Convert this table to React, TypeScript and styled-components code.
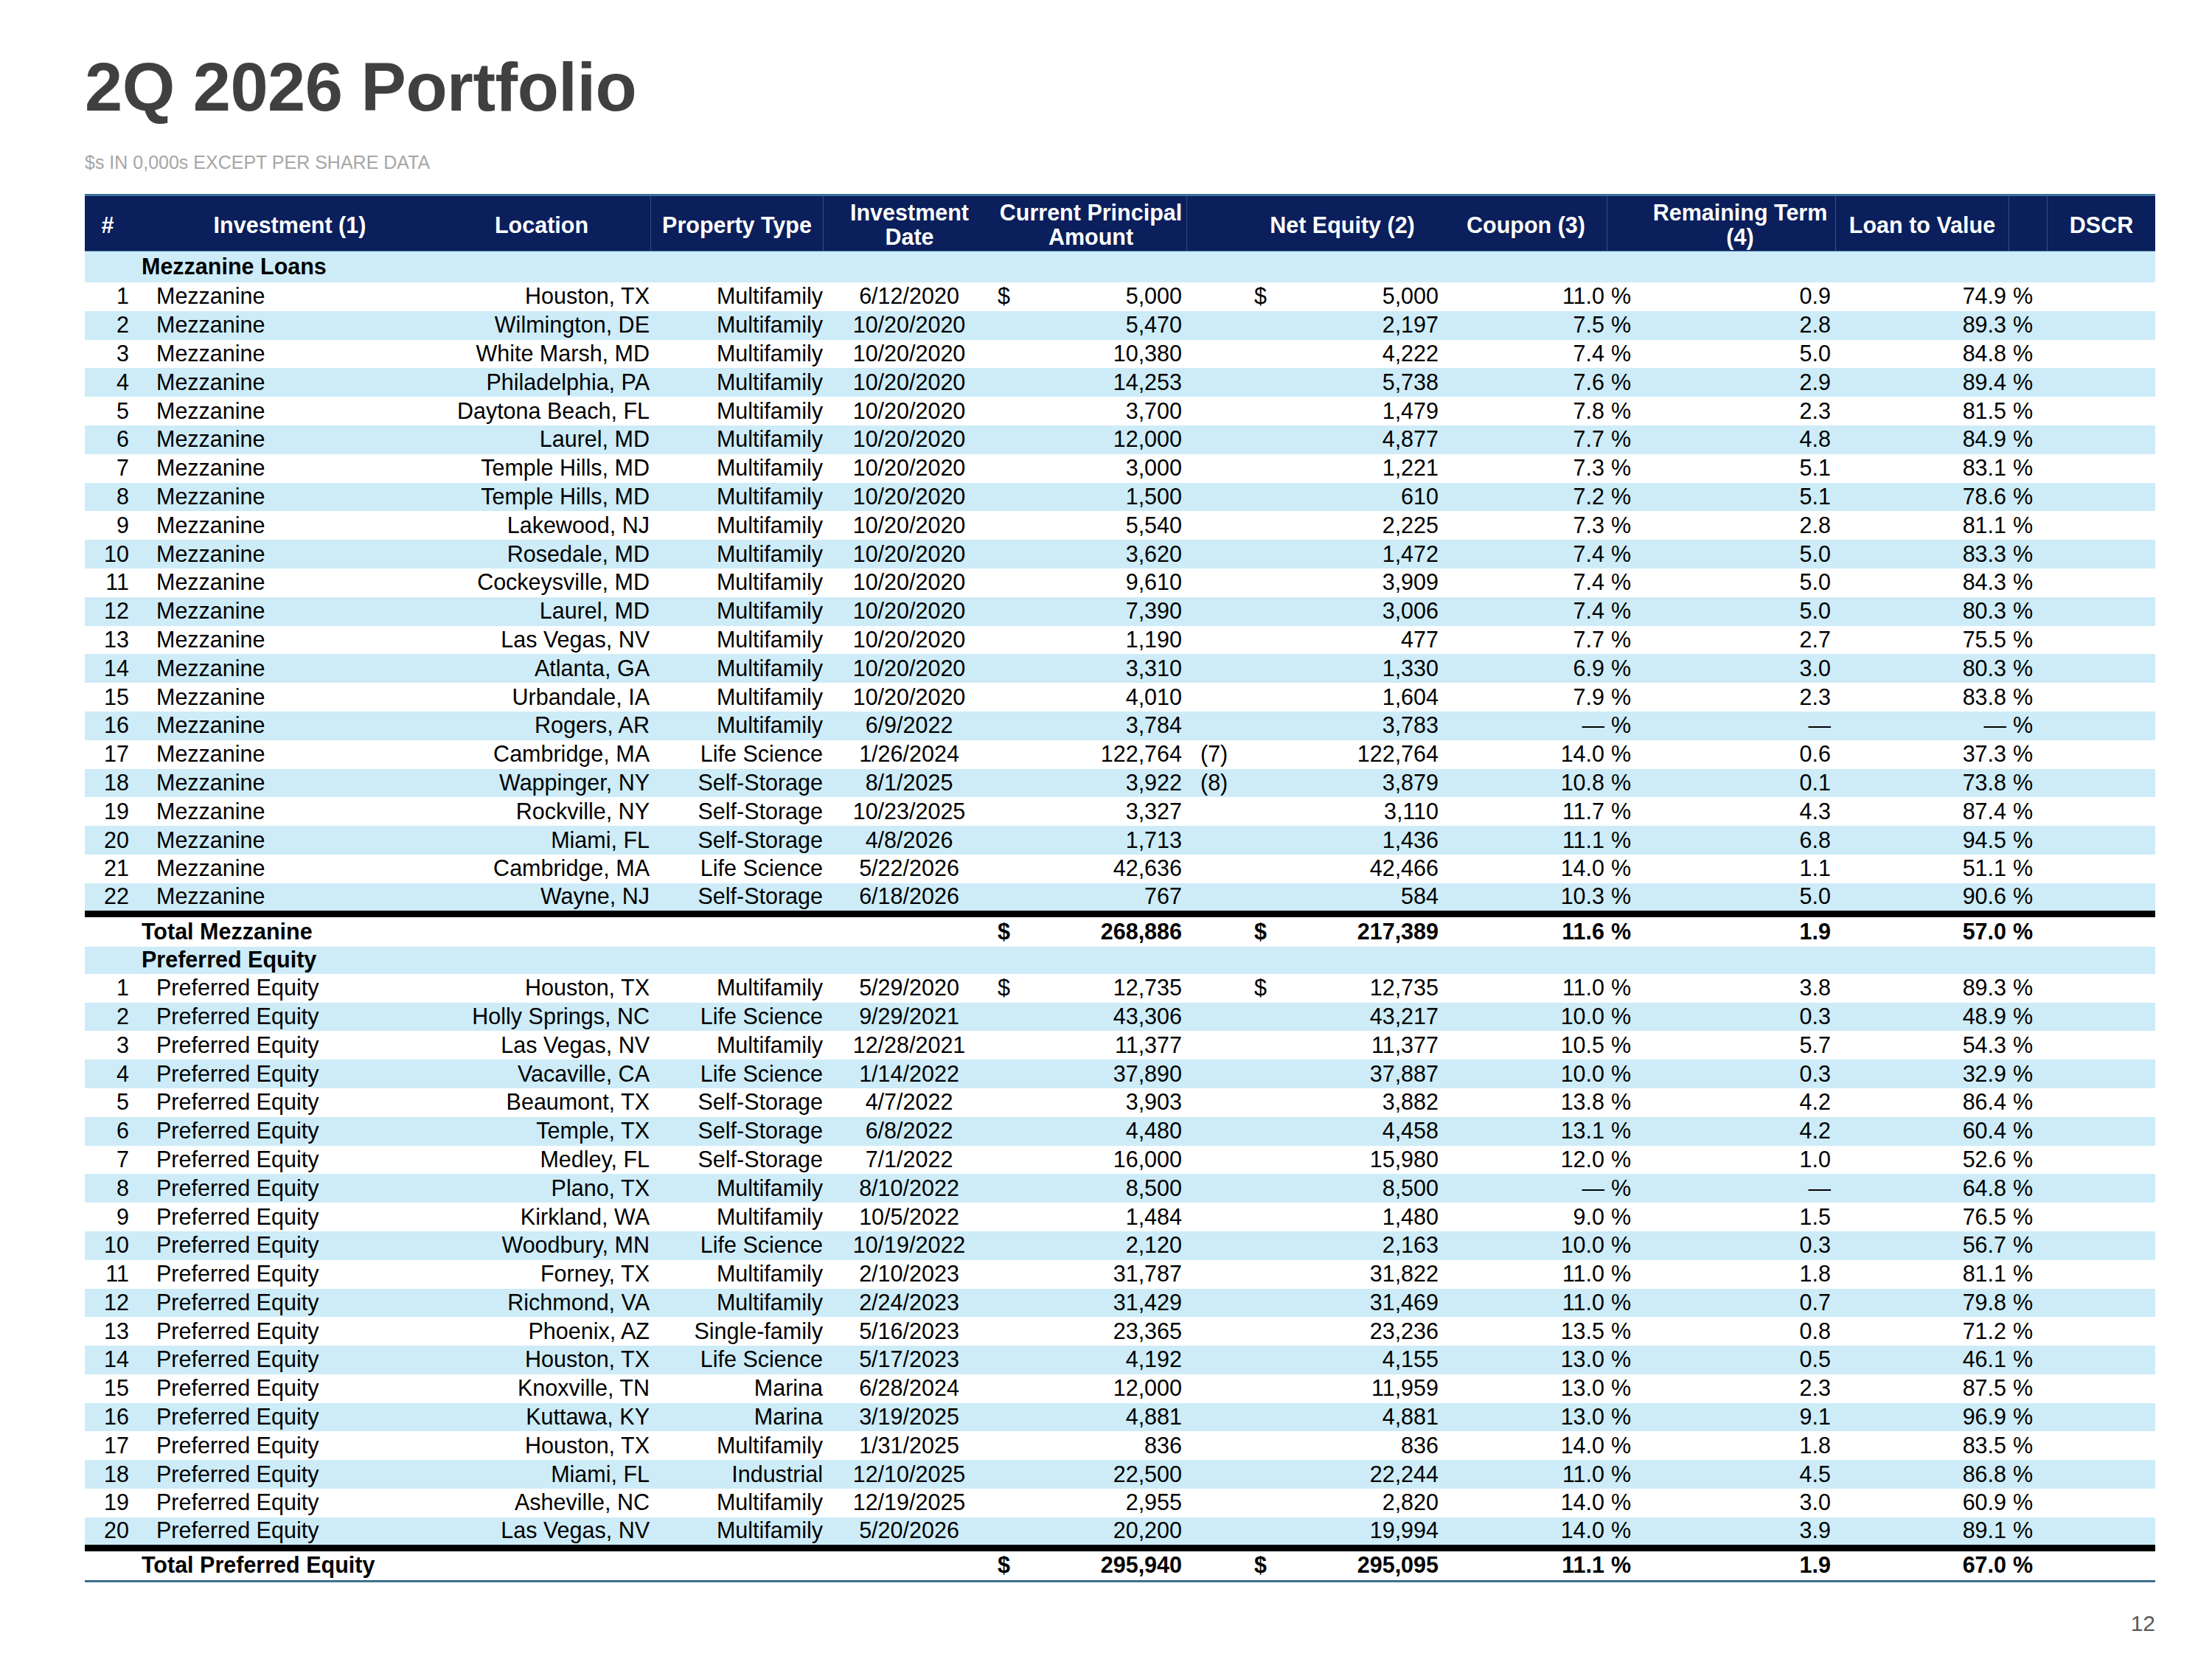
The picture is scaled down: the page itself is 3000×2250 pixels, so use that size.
import React from "react";
import styled, { createGlobalStyle } from "styled-components";

const GlobalStyle = createGlobalStyle`
  html, body { margin: 0; padding: 0; background: #ffffff; }
  body { font-family: "Liberation Sans", Arial, sans-serif; color: #000000; }
  * { box-sizing: border-box; }
`;

const COLS =
  "62px 432px 273px 234px 234px 259px 71px 280px 219px 51px 259px 235px 52px 147px";

const Page = styled.div`
  width: 3000px;
  height: 2250px;
  padding: 72px 77px 0 115px;
  display: flex;
  flex-direction: column;
  overflow: hidden;
`;

const Title = styled.h1`
  margin: 0;
  font-size: 92px;
  line-height: 92px;
  font-weight: bold;
  color: #404040;
  letter-spacing: -0.5px;
`;

const Subtitle = styled.div`
  margin-top: 42px;
  font-size: 25px;
  line-height: 28px;
  color: #a6a6a6;
`;

const Table = styled.div`
  margin-top: 29px;
  width: 2808px;
  display: flex;
  flex-direction: column;
  border-bottom: 3px solid #3d6f8e;
`;

const HeaderRow = styled.div`
  display: grid;
  grid-template-columns: ${COLS};
  height: 78px;
  background: #0a1f5c;
  border-top: 3px solid #3e6f98;
  border-bottom: 1px solid #3e6f98;
`;

const HeadCell = styled.div<{ $span?: number; $sep?: boolean; $pl?: number; $pr?: number }>`
  grid-column: span ${(p) => p.$span ?? 1};
  display: flex;
  align-items: center;
  justify-content: center;
  text-align: center;
  padding: 4px ${(p) => p.$pr ?? 0}px 0 ${(p) => p.$pl ?? 0}px;
  color: #ffffff;
  font-weight: bold;
  font-size: 30.5px;
  line-height: 33px;
  white-space: nowrap;
  border-left: ${(p) => (p.$sep ? "1px solid #2f4f86" : "none")};
`;

const Row = styled.div<{ $band?: boolean; $h: number; $bold?: boolean }>`
  display: grid;
  grid-template-columns: ${COLS};
  height: ${(p) => p.$h}px;
  align-items: center;
  background: ${(p) => (p.$band ? "#cdecf8" : "#ffffff")};
  font-size: 30.5px;
  line-height: 34px;
  font-weight: ${(p) => (p.$bold ? "bold" : "normal")};
  padding-bottom: 2px;
`;

const Cell = styled.div<{
  $align?: "left" | "right" | "center";
  $pl?: number;
  $pr?: number;
  $span?: number;
}>`
  grid-column: span ${(p) => p.$span ?? 1};
  display: flex;
  justify-content: ${(p) =>
    p.$align === "right" ? "flex-end" : p.$align === "center" ? "center" : "flex-start"};
  padding-left: ${(p) => p.$pl ?? 0}px;
  padding-right: ${(p) => p.$pr ?? 0}px;
  white-space: nowrap;
`;

const Money = styled.div<{ $pl: number; $pr: number }>`
  display: flex;
  justify-content: space-between;
  padding-left: ${(p) => p.$pl}px;
  padding-right: ${(p) => p.$pr}px;
  white-space: nowrap;
`;

const Rule = styled.div`
  height: 9px;
  background: #000000;
`;

const PageNumber = styled.div`
  width: 2808px;
  margin-top: 38px;
  text-align: right;
  font-size: 30px;
  line-height: 36px;
  color: #595959;
`;

type D = [string, string, string, string, string, string, string, string, string];

const mezz: D[] = [
  ["Houston, TX", "Multifamily", "6/12/2020", "5,000", "", "5,000", "11.0", "0.9", "74.9"],
  ["Wilmington, DE", "Multifamily", "10/20/2020", "5,470", "", "2,197", "7.5", "2.8", "89.3"],
  ["White Marsh, MD", "Multifamily", "10/20/2020", "10,380", "", "4,222", "7.4", "5.0", "84.8"],
  ["Philadelphia, PA", "Multifamily", "10/20/2020", "14,253", "", "5,738", "7.6", "2.9", "89.4"],
  ["Daytona Beach, FL", "Multifamily", "10/20/2020", "3,700", "", "1,479", "7.8", "2.3", "81.5"],
  ["Laurel, MD", "Multifamily", "10/20/2020", "12,000", "", "4,877", "7.7", "4.8", "84.9"],
  ["Temple Hills, MD", "Multifamily", "10/20/2020", "3,000", "", "1,221", "7.3", "5.1", "83.1"],
  ["Temple Hills, MD", "Multifamily", "10/20/2020", "1,500", "", "610", "7.2", "5.1", "78.6"],
  ["Lakewood, NJ", "Multifamily", "10/20/2020", "5,540", "", "2,225", "7.3", "2.8", "81.1"],
  ["Rosedale, MD", "Multifamily", "10/20/2020", "3,620", "", "1,472", "7.4", "5.0", "83.3"],
  ["Cockeysville, MD", "Multifamily", "10/20/2020", "9,610", "", "3,909", "7.4", "5.0", "84.3"],
  ["Laurel, MD", "Multifamily", "10/20/2020", "7,390", "", "3,006", "7.4", "5.0", "80.3"],
  ["Las Vegas, NV", "Multifamily", "10/20/2020", "1,190", "", "477", "7.7", "2.7", "75.5"],
  ["Atlanta, GA", "Multifamily", "10/20/2020", "3,310", "", "1,330", "6.9", "3.0", "80.3"],
  ["Urbandale, IA", "Multifamily", "10/20/2020", "4,010", "", "1,604", "7.9", "2.3", "83.8"],
  ["Rogers, AR", "Multifamily", "6/9/2022", "3,784", "", "3,783", "—", "—", "—"],
  ["Cambridge, MA", "Life Science", "1/26/2024", "122,764", "(7)", "122,764", "14.0", "0.6", "37.3"],
  ["Wappinger, NY", "Self-Storage", "8/1/2025", "3,922", "(8)", "3,879", "10.8", "0.1", "73.8"],
  ["Rockville, NY", "Self-Storage", "10/23/2025", "3,327", "", "3,110", "11.7", "4.3", "87.4"],
  ["Miami, FL", "Self-Storage", "4/8/2026", "1,713", "", "1,436", "11.1", "6.8", "94.5"],
  ["Cambridge, MA", "Life Science", "5/22/2026", "42,636", "", "42,466", "14.0", "1.1", "51.1"],
  ["Wayne, NJ", "Self-Storage", "6/18/2026", "767", "", "584", "10.3", "5.0", "90.6"],
];

const pref: D[] = [
  ["Houston, TX", "Multifamily", "5/29/2020", "12,735", "", "12,735", "11.0", "3.8", "89.3"],
  ["Holly Springs, NC", "Life Science", "9/29/2021", "43,306", "", "43,217", "10.0", "0.3", "48.9"],
  ["Las Vegas, NV", "Multifamily", "12/28/2021", "11,377", "", "11,377", "10.5", "5.7", "54.3"],
  ["Vacaville, CA", "Life Science", "1/14/2022", "37,890", "", "37,887", "10.0", "0.3", "32.9"],
  ["Beaumont, TX", "Self-Storage", "4/7/2022", "3,903", "", "3,882", "13.8", "4.2", "86.4"],
  ["Temple, TX", "Self-Storage", "6/8/2022", "4,480", "", "4,458", "13.1", "4.2", "60.4"],
  ["Medley, FL", "Self-Storage", "7/1/2022", "16,000", "", "15,980", "12.0", "1.0", "52.6"],
  ["Plano, TX", "Multifamily", "8/10/2022", "8,500", "", "8,500", "—", "—", "64.8"],
  ["Kirkland, WA", "Multifamily", "10/5/2022", "1,484", "", "1,480", "9.0", "1.5", "76.5"],
  ["Woodbury, MN", "Life Science", "10/19/2022", "2,120", "", "2,163", "10.0", "0.3", "56.7"],
  ["Forney, TX", "Multifamily", "2/10/2023", "31,787", "", "31,822", "11.0", "1.8", "81.1"],
  ["Richmond, VA", "Multifamily", "2/24/2023", "31,429", "", "31,469", "11.0", "0.7", "79.8"],
  ["Phoenix, AZ", "Single-family", "5/16/2023", "23,365", "", "23,236", "13.5", "0.8", "71.2"],
  ["Houston, TX", "Life Science", "5/17/2023", "4,192", "", "4,155", "13.0", "0.5", "46.1"],
  ["Knoxville, TN", "Marina", "6/28/2024", "12,000", "", "11,959", "13.0", "2.3", "87.5"],
  ["Kuttawa, KY", "Marina", "3/19/2025", "4,881", "", "4,881", "13.0", "9.1", "96.9"],
  ["Houston, TX", "Multifamily", "1/31/2025", "836", "", "836", "14.0", "1.8", "83.5"],
  ["Miami, FL", "Industrial", "12/10/2025", "22,500", "", "22,244", "11.0", "4.5", "86.8"],
  ["Asheville, NC", "Multifamily", "12/19/2025", "2,955", "", "2,820", "14.0", "3.0", "60.9"],
  ["Las Vegas, NV", "Multifamily", "5/20/2026", "20,200", "", "19,994", "14.0", "3.9", "89.1"],
];

type Vals = { cpa: string; ne: string; cp: string; term: string; ltv: string; dollar: boolean };

function NumberCells({ cpa, ne, cp, term, ltv, dollar, fn }: Vals & { fn?: string }) {
  return (
    <>
      <Money $pl={3} $pr={6}>
        <span>{dollar ? "$" : ""}</span>
        <span>{cpa}</span>
      </Money>
      <Cell $pl={19}>{fn}</Cell>
      <Money $pl={21} $pr={9}>
        <span>{dollar ? "$" : ""}</span>
        <span>{ne}</span>
      </Money>
      <Cell $align="right" $pr={3}>{cp}</Cell>
      <Cell $pl={6}>%</Cell>
      <Cell $align="right" $pr={6}>{term}</Cell>
      <Cell $align="right" $pr={3}>{ltv}</Cell>
      <Cell $pl={6}>%</Cell>
      <Cell />
    </>
  );
}

function Section({
  title,
  name,
  rows,
  total,
  sectionHeight,
  totalHeight,
}: {
  title: string;
  name: string;
  rows: D[];
  total: { label: string; cpa: string; ne: string; cp: string; term: string; ltv: string };
  sectionHeight: number;
  totalHeight: number;
}) {
  return (
    <>
      <Row $band $h={sectionHeight} $bold>
        <Cell />
        <Cell $pl={15} $span={3}>
          {title}
        </Cell>
      </Row>
      {rows.map((d, i) => (
        <Row key={i} $band={i % 2 === 1} $h={i === rows.length - 1 ? 37 : 38.8}>
          <Cell $align="right" $pr={2}>{i + 1}</Cell>
          <Cell $pl={35}>{name}</Cell>
          <Cell $align="right" $pr={1}>{d[0]}</Cell>
          <Cell $align="right">{d[1]}</Cell>
          <Cell $align="center">{d[2]}</Cell>
          <NumberCells
            dollar={i === 0}
            cpa={d[3]}
            fn={d[4]}
            ne={d[5]}
            cp={d[6]}
            term={d[7]}
            ltv={d[8]}
          />
        </Row>
      ))}
      <Rule />
      <Row $h={totalHeight} $bold>
        <Cell />
        <Cell $pl={15} $span={4}>
          {total.label}
        </Cell>
        <NumberCells
          dollar
          cpa={total.cpa}
          ne={total.ne}
          cp={total.cp}
          term={total.term}
          ltv={total.ltv}
        />
      </Row>
    </>
  );
}

export default function App() {
  return (
    <>
      <GlobalStyle />
      <Page>
        <Title>2Q 2026 Portfolio</Title>
        <Subtitle>$s IN 0,000s EXCEPT PER SHARE DATA</Subtitle>
        <Table>
          <HeaderRow>
            <HeadCell>#</HeadCell>
            <HeadCell>Investment (1)</HeadCell>
            <HeadCell $pr={22}>Location</HeadCell>
            <HeadCell $sep>Property Type</HeadCell>
            <HeadCell $sep>
              Investment
              <br />
              Date
            </HeadCell>
            <HeadCell>
              Current Principal
              <br />
              Amount
            </HeadCell>
            <HeadCell $span={2} $sep $pl={71}>
              Net Equity (2)
            </HeadCell>
            <HeadCell>Coupon (3)</HeadCell>
            <HeadCell $span={2} $sep $pl={51}>
              Remaining Term
              <br />
              (4)
            </HeadCell>
            <HeadCell $sep>Loan to Value</HeadCell>
            <HeadCell $sep />
            <HeadCell $sep>DSCR</HeadCell>
          </HeaderRow>
          <Section
            title="Mezzanine Loans"
            name="Mezzanine"
            rows={mezz}
            sectionHeight={42}
            totalHeight={40}
            total={{
              label: "Total Mezzanine",
              cpa: "268,886",
              ne: "217,389",
              cp: "11.6",
              term: "1.9",
              ltv: "57.0",
            }}
          />
          <Section
            title="Preferred Equity"
            name="Preferred Equity"
            rows={pref}
            sectionHeight={37}
            totalHeight={39}
            total={{
              label: "Total Preferred Equity",
              cpa: "295,940",
              ne: "295,095",
              cp: "11.1",
              term: "1.9",
              ltv: "67.0",
            }}
          />
        </Table>
        <PageNumber>12</PageNumber>
      </Page>
    </>
  );
}
